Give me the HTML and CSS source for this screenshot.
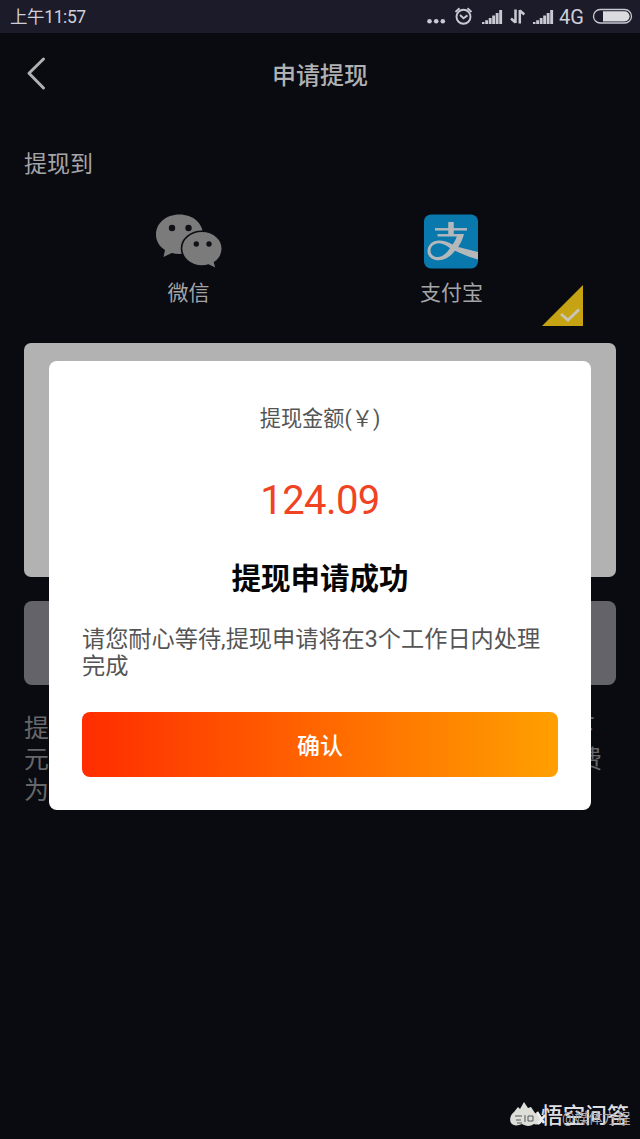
FILE: index.html
```html
<!DOCTYPE html>
<html lang="zh-CN">
<head>
<meta charset="utf-8">
<title>申请提现</title>
<link rel="stylesheet" href="styles.css">
</head>
<body>
<div class="screen">
  <div class="status">
    <span class="time">上午11:57</span>
    <svg class="status-icons" width="220" height="33" viewBox="0 0 220 33">
      <g fill="#c9c9d3">
        <circle cx="9.500" cy="21.200" r="2.300"/><circle cx="16.200" cy="21.200" r="2.300"/><circle cx="22.800" cy="21.200" r="2.300"/>
        <path id="signal" d="M62 22h2.500v2h-2.500zM65.200 20.300h2.800v3.700h-2.800zM68.700 18h2.900v6h-2.900zM72.200 15.500h2.900v8.500h-2.900zM75.700 13h2.900v11h-2.900zM79.200 10h2.900v14h-2.900z"/>
        <use href="#signal" x="51"/>
      </g>
      <g fill="none" stroke="#c9c9d3">
        <circle cx="43.500" cy="16.800" r="7" stroke-width="1.900"/>
        <path d="M40 15l3.500 3.200 4-2.800M35.500 12l4-3.700M51.500 12l-4-3.700" stroke-width="1.900"/>
        <path d="M95.500 9.500v13.500M91 18.500l4.500 4M99.800 23.500V10M99.800 10.500l4.500 4" stroke-width="2.500"/>
        <rect x="173.500" y="9.500" width="38" height="13.500" rx="6.750" stroke-width="1.300"/>
      </g>
      <path d="M183 11.200h21.500a5 5 0 0 1 0 10.200H183z" fill="#dadadf"/>
    </svg>
    <span class="network">4G</span>
  </div>
  <header class="header">
    <svg class="back" width="24" height="38" viewBox="0 0 24 38"><path d="M19.500 4L5 18.300l14.500 14.700" fill="none" stroke="#b1b1b3" stroke-width="3" stroke-linecap="round" stroke-linejoin="round"/></svg>
    <h1>申请提现</h1>
  </header>
  <main class="content">
    <div class="section-label">提现到</div>
    <div class="methods">
      <div class="method">
        <svg width="68" height="56" viewBox="0 0 68 56">
          <path d="M24.500 .5C11 .5 1 9.200 1 20.500c0 6.500 3.200 11.700 9 15.500L8.500 43l8.300-4.100c2.500.7 5 1 7.700 1C38 39.900 48 31.700 48 20.500S38 .5 24.500 .5z" fill="#7b7b7b"/>
          <path d="M47 17.200C35.500 17.200 26.500 25 26.500 34.500S35.500 52 47 52c2.300 0 4.500-.3 6.500-.9L61.500 55l-1.900-6.500c4.900-3.300 7.700-8.200 7.700-14 0-9.500-8.800-17.300-20.300-17.300z" fill="#7b7b7b" stroke="#0c0d14" stroke-width="1.600"/>
          <g fill="#101116"><circle cx="17" cy="14" r="3.200"/><circle cx="33.500" cy="14" r="3.200"/><circle cx="41.300" cy="30" r="2.700"/><circle cx="54" cy="30" r="2.700"/></g>
        </svg>
        <span>微信</span>
      </div>
      <div class="method selected">
        <svg class="alipay" width="56" height="56" viewBox="0 0 56 56">
          <rect x="1" y=".5" width="54" height="54" rx="7" fill="#0878ad"/>
          <g fill="none" stroke="#b5b8bb">
            <path d="M28 8v13" stroke-width="5.500"/>
            <path d="M12 15.300h32" stroke-width="2.400"/>
            <path d="M14.500 21.300h23" stroke-width="2.400"/>
          </g>
          <path d="M34.500 20h6.500c-1.200 5-3.200 9-5.800 13L55 38v7.500c-8.500-2.500-15.500-5.200-23-8.700C27.500 42.500 22 46.300 15.800 46.300 8.700 46.300 4.500 42 4.500 37.300c0-6 4.900-10.700 11.500-10.700 4.500 0 9 1.500 13.500 3.800 2.300-2.800 4-6.400 5-10.400zM27 34.300c-3.500-2.600-7.200-5-11-5-5.500 0-8.500 3.800-8.500 7.500 0 3.900 3.200 6.300 7.400 6.300 4.600 0 9.100-4.400 12.100-8.800z" fill="#b5b8bb" fill-rule="evenodd"/>
        </svg>
        <span>支付宝</span>
        <svg class="check" width="42" height="42" viewBox="0 0 42 42"><path d="M41 0v41H0z" fill="#c5a312"/><path d="M19 29l7 6L37 24.500" fill="none" stroke="#c9c5b8" stroke-width="2.800"/></svg>
      </div>
    </div>
    <div class="amount-panel"></div>
    <div class="submit"></div>
    <div class="notes">
      <div class="note-line short"><span>提</span><span>下</span></div>
      <div class="note-line"><span>元</span><span>费</span></div>
      <div class="note-line"><span>为</span></div>
    </div>
  </main>
  <div class="dialog">
    <div class="dialog-label">提现金额(￥)</div>
    <div class="dialog-amount">124.09</div>
    <div class="dialog-title">提现申请成功</div>
    <p class="dialog-message">请您耐心等待,提现申请将在3个工作日内处理完成</p>
    <button class="confirm">确认</button>
  </div>
  <div class="watermark">
    <svg width="38" height="30" viewBox="0 0 38 30"><path d="M5 11l4-5 2 2 4-7 4 6 3-1 4 6c5 1 7 4 7 8-1 4-5 4-8 3-4 3-9 2-12 0-4 2-9 2-11-1-2-4 0-9 3-11z" fill="#deded9"/><path d="M6 15h7M7 19h5M16 14v7M19 15h5v5h-5zM8 22h5" fill="none" stroke="#55565c" stroke-width="1"/><path d="M28 11l7 11M29 23l7-9" stroke="#eee" stroke-width="2.500"/></svg>
    <span class="brand">悟空问答</span>
    <span class="author">@媒体方程</span>
  </div>
</div>
</body>
</html>
```
FILE: styles.css
```css
* { box-sizing: border-box; }
body {
  margin: 0;
  background: #0a0b10;
  font-family: Roboto, "Noto Sans CJK SC", sans-serif;
}
.screen {
  position: relative;
  width: 640px;
  height: 1139px;
  overflow: hidden;
  background: #0a0b10;
}
.status {
  position: relative;
  display: flex;
  justify-content: space-between;
  height: 33px;
  padding-left: 10px;
  background: #1b1b29;
  color: #cfcfda;
}
.time { font-size: 17.5px; line-height: 35px; letter-spacing: -0.4px; }
.network {
  position: absolute;
  left: 559px;
  top: 0;
  font-size: 20px;
  line-height: 35px;
}
.header {
  display: grid;
  grid-template-columns: 24px 1fr 24px;
  align-items: center;
  height: 82px;
  padding: 0 24px;
}
h1 {
  margin: 0;
  padding-top: 3px;
  font-size: 24px;
  font-weight: 500;
  line-height: 36px;
  text-align: center;
  color: #b1b1b3;
}
.content { padding: 32px 24px 0; }
.section-label { font-size: 23px; line-height: 36px; color: #a5a5a8; }
.methods { display: flex; height: 159.5px; padding: 31px 33px 0; }
.method {
  position: relative;
  display: flex;
  flex: 1;
  flex-direction: column;
  align-items: center;
  height: 112px;
  font-size: 21px;
  line-height: 32px;
  color: #a5a5a8;
}
.method span { margin-top: 7px; }
.alipay { margin-right: 2px; }
.check { position: absolute; right: -1px; bottom: -1px; }
.amount-panel { height: 234.5px; border-radius: 7px; background: #b2b2b2; }
.submit { height: 84px; margin-top: 24px; border-radius: 8px; background: #646369; }
.notes { padding: 28px 14px 0 0; font-size: 25px; line-height: 31px; color: #67676b; }
.note-line { display: flex; justify-content: space-between; }
.short { padding-right: 7px; }
.dialog {
  position: absolute;
  left: 49px;
  top: 361px;
  display: flex;
  flex-direction: column;
  width: 542px;
  height: 449px;
  padding: 42px 33px 33px;
  border-radius: 8px;
  background: #fff;
  text-align: center;
}
.dialog-label { font-size: 21.2px; line-height: 32px; color: #555; }
.dialog-amount { margin-top: 41px; font-size: 40px; line-height: 50px; letter-spacing: -0.6px; color: #f04323; }
.dialog-title { margin-top: 32px; font-size: 29.5px; font-weight: 700; line-height: 42px; color: #050505; }
.dialog-message {
  margin: 26px 0 0;
  font-size: 23.2px;
  line-height: 27px;
  text-align: left;
  color: #555;
}
.confirm {
  height: 65px;
  margin-top: auto;
  padding-top: 5px;
  border: 0;
  border-radius: 8px;
  background: linear-gradient(90deg, #ff2d00, #ffa000);
  font: 500 23px/33px Roboto, "Noto Sans CJK SC", sans-serif;
  color: #fff;
}
.watermark {
  position: absolute;
  left: 509px;
  top: 1101px;
  display: flex;
  width: 124px;
  height: 30px;
  white-space: nowrap;
  color: #dedee0;
}
.watermark svg { flex: none; }
.brand { margin-left: -6px; font-size: 22px; font-weight: 500; line-height: 30px; }
.author { position: absolute; left: 53px; top: 4px; font-size: 14px; line-height: 26px; color: #aaaab0; }
```
